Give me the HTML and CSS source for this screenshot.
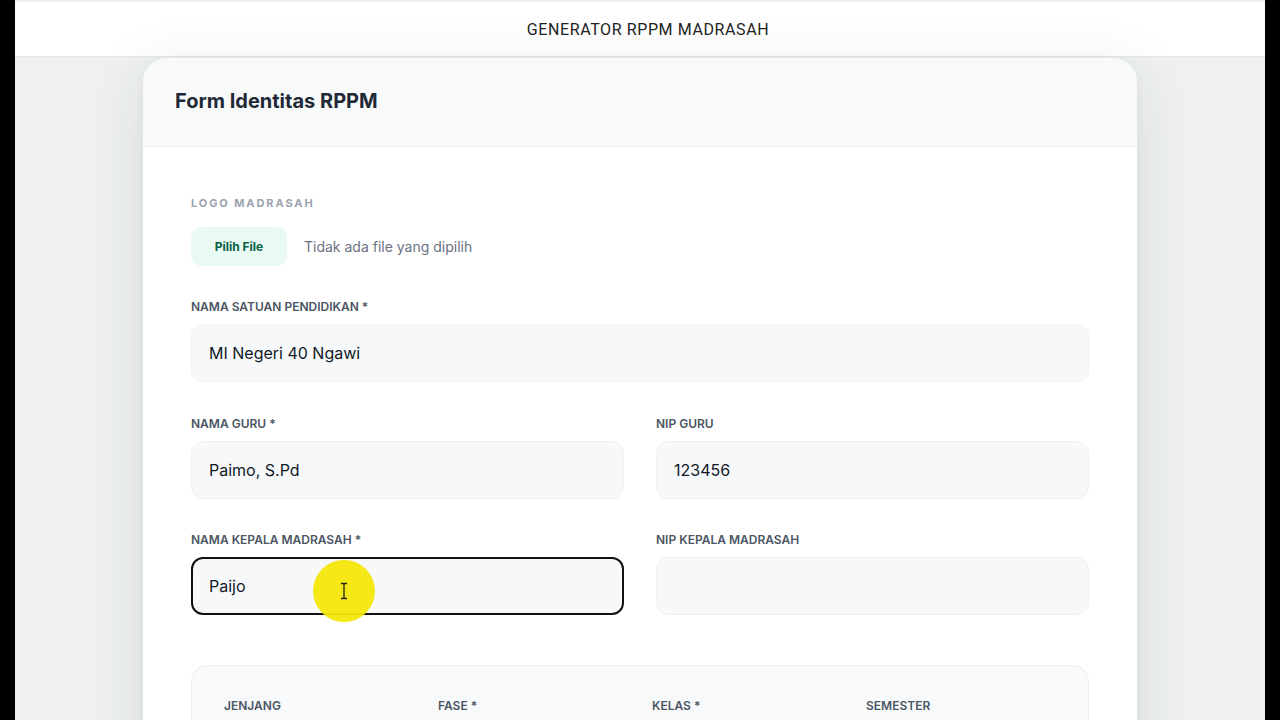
FILE: index.html
```html
<!DOCTYPE html>
<html lang="id">
<head>
<meta charset="utf-8">
<title>Generator RPPM Madrasah</title>
<link rel="stylesheet" href="styles.css">
</head>
<body>
<div class="frame">
  <header class="topbar">GENERATOR RPPM MADRASAH</header>
  <main class="container">
    <section class="card">
      <div class="card-head"><h1>Form Identitas RPPM</h1></div>
      <div class="card-body">
        <div class="logo-label">LOGO MADRASAH</div>
        <div class="file-row">
          <span class="file-btn">Pilih File</span>
          <span class="file-name">Tidak ada file yang dipilih</span>
        </div>

        <div class="field">
          <label class="lbl">NAMA SATUAN PENDIDIKAN *</label>
          <div class="input">MI Negeri 40 Ngawi</div>
        </div>

        <div class="grid2">
          <div class="field">
            <label class="lbl">NAMA GURU *</label>
            <div class="input">Paimo, S.Pd</div>
          </div>
          <div class="field">
            <label class="lbl">NIP GURU</label>
            <div class="input">123456</div>
          </div>
          <div class="field">
            <label class="lbl">NAMA KEPALA MADRASAH *</label>
            <div class="input focused">Paijo
              <span class="cursor-dot">
                <svg class="ibeam" width="10" height="18" viewBox="0 0 10 18"><path d="M2 1.5h2.2c.4 0 .8.4.8.8v13.4c0 .4.4.8.8.8H8M8 1.5H5.8c-.4 0-.8.4-.8.8M2 16.5h2.2c.4 0 .8-.4.8-.8" fill="none" stroke="#222" stroke-width="1.3"/></svg>
              </span>
            </div>
          </div>
          <div class="field">
            <label class="lbl">NIP KEPALA MADRASAH</label>
            <div class="input"></div>
          </div>
        </div>

        <div class="subbox">
          <div class="grid4">
            <div class="field"><label class="lbl">JENJANG</label><div class="input"></div></div>
            <div class="field"><label class="lbl">FASE *</label><div class="input"></div></div>
            <div class="field"><label class="lbl">KELAS *</label><div class="input"></div></div>
            <div class="field"><label class="lbl">SEMESTER</label><div class="input"></div></div>
          </div>
        </div>
      </div>
    </section>
  </main>
</div>
</body>
</html>
```

FILE: styles.css
```css
* { box-sizing: border-box; }
html, body { margin: 0; padding: 0; }
body {
  background: #000;
  font-family: Inter, "Noto Sans", "Liberation Sans", sans-serif;
  color: #111827;
  overflow: hidden;
}
.frame {
  margin: 0 15px;
  background: #eef0f1;
  min-height: 100vh;
}
.topbar {
  height: 57px;
  background: #fff;
  border-top: 2px solid #eceeef;
  border-bottom: 1px solid #e6e8ea;
  display: flex;
  align-items: center;
  justify-content: center;
  padding-left: 16px;
  font-family: Roboto, Inter, sans-serif;
  font-size: 16px;
  color: #222;
  letter-spacing: 0.6px;
}
.container {
  width: 994px;
  margin: 1px auto 0;
}
.card {
  background: #fff;
  border-radius: 24px 24px 0 0;
  box-shadow: 0 10px 60px rgba(40, 50, 60, 0.10), 0 2px 8px rgba(40, 50, 60, 0.04);
  overflow: hidden;
}
.card-head {
  height: 89px;
  display: flex;
  align-items: center;
  padding: 0 32px 2px;
  background: #f8faf9;
  border-bottom: 1px solid #e8ecea;
}
.card-head h1 {
  margin: 0;
  font-size: 20px;
  font-weight: 700;
  color: #1f2937;
  letter-spacing: 0;
}
.card-body {
  padding: 49px 48px 60px;
}
.logo-label {
  font-size: 11px;
  font-weight: 700;
  letter-spacing: 1.9px;
  color: #9ca3af;
  line-height: 14px;
}
.file-row {
  display: flex;
  align-items: center;
  gap: 17px;
  margin-top: 17px;
}
.file-btn {
  width: 96px;
  height: 39px;
  border-radius: 10px;
  background: #e9faf3;
  color: #065f46;
  font-size: 12px;
  font-weight: 700;
  display: flex;
  align-items: center;
  justify-content: center;
}
.file-name {
  font-size: 14px;
  color: #6b7280;
}
.field { display: flex; flex-direction: column; }
.file-row + .field { margin-top: 33px; }
.lbl {
  font-size: 12px;
  font-weight: 600;
  line-height: 16px;
  color: #4b5563;
  letter-spacing: 0;
  margin-bottom: 9px;
}
.input {
  position: relative;
  height: 58px;
  border-radius: 12px;
  background: #f7f8f9;
  border: 1px solid #f0f2f4;
  display: flex;
  align-items: center;
  padding-left: 17px;
  font-size: 16px;
  color: #111827;
}
.input.focused {
  border: 2px solid #111;
  padding-left: 16px;
}
.grid2 {
  display: grid;
  grid-template-columns: 1fr 1fr;
  column-gap: 32px;
  row-gap: 33px;
  margin-top: 34px;
}
.cursor-dot {
  position: absolute;
  left: 120px;
  top: 1px;
  width: 62px;
  height: 62px;
  border-radius: 50%;
  background: rgba(246, 230, 10, 0.95);
  display: flex;
  align-items: center;
  justify-content: center;
}
.subbox {
  margin-top: 50px;
  background: #f8f9fa;
  border: 1px solid #eceff1;
  border-radius: 16px;
  padding: 32px 32px 32px;
}
.grid4 {
  display: grid;
  grid-template-columns: repeat(4, 1fr);
  column-gap: 24px;
}
.grid4 .lbl { color: #4b5563; }
.grid4 .input { background: #fff; border-color: #e5e7eb; }
```
